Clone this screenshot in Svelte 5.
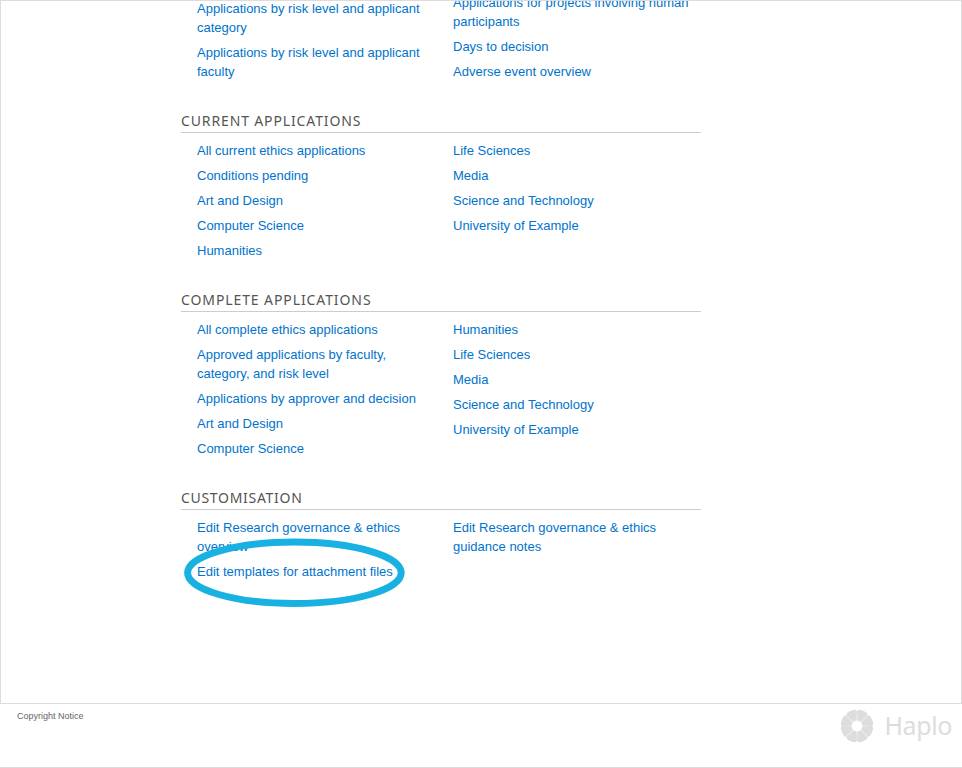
<script>
  const sections = [
    {
      title: 'Current applications', spacing: 0.87,
      left: ['All current ethics applications', 'Conditions pending', 'Art and Design', 'Computer Science', 'Humanities'],
      right: ['Life Sciences', 'Media', 'Science and Technology', 'University of Example']
    },
    {
      title: 'Complete applications', spacing: 0.9,
      left: ['All complete ethics applications', 'Approved applications by faculty,\ncategory, and risk level', 'Applications by approver and decision', 'Art and Design', 'Computer Science'],
      right: ['Humanities', 'Life Sciences', 'Media', 'Science and Technology', 'University of Example']
    },
    {
      title: 'Customisation', spacing: 0.7,
      left: ['Edit Research governance & ethics\noverview', 'Edit templates for attachment files'],
      right: ['Edit Research governance & ethics\nguidance notes']
    }
  ];
  const first = {
    left: ['Applications by risk level and applicant\ncategory', 'Applications by risk level and applicant\nfaculty'],
    right: ['Applications for projects involving human\nparticipants', 'Days to decision', 'Adverse event overview']
  };
  const petals = [0, 45, 90, 135, 180, 225, 270, 315];
</script>

{#snippet columns(group)}
  <div class="columns">
    {#each [group.left, group.right] as links}
      <ul>
        {#each links as link}
          <li>
            <a href="#top">{link}</a>
            {#if link.startsWith('Edit templates')}
              <svg class="ring" width="222" height="70" viewBox="0 0 222 70">
                <ellipse cx="111.4" cy="34.8" rx="106.8" ry="30.7" />
              </svg>
            {/if}
          </li>
        {/each}
      </ul>
    {/each}
  </div>
{/snippet}

<div class="screen">
  <main>
    <div class="content">
      <div class="first">{@render columns(first)}</div>
      {#each sections as section}
        <section>
          <h2 style:letter-spacing="{section.spacing}px">{section.title}</h2>
          {@render columns(section)}
        </section>
      {/each}
    </div>
  </main>
  <footer>
    <a class="copyright" href="#top">Copyright Notice</a>
    <div class="brand">
      <svg width="34" height="34" viewBox="-17 -17 34 34">
        {#each petals as angle}
          <path transform="rotate({angle + 22.5})" d="M-1.8 -5.1 L-5.7 -14 Q-5.1 -15.6 -3.6 -16 Q0 -16.7 3.6 -16 Q5.1 -15.6 5.7 -14 L1.8 -5.1 Q0 -5.7 -1.8 -5.1Z" />
        {/each}
      </svg>
      <span>Haplo</span>
    </div>
  </footer>
</div>

<style>
  :global(body) { background: #fff; }
  .screen {
    box-sizing: border-box;
    width: 962px;
    height: 768px;
    display: flex;
    flex-direction: column;
    border-bottom: 1px solid #ddd;
    font-family: "Liberation Sans", Arial, sans-serif;
    overflow: hidden;
  }
  main {
    box-sizing: border-box;
    height: 704px;
    border: 1px solid #ddd;
    padding-left: 180px;
    overflow: hidden;
  }
  .content { width: 520px; }
  .first {
    height: 86px;
    display: flex;
    align-items: flex-end;
  }
  .first .columns { align-items: flex-end; }
  .columns { display: flex; padding-left: 16px; }
  ul { flex: none; list-style: none; margin: 0; padding: 0; width: 256px; }
  li { position: relative; margin-bottom: 6px; line-height: 19px; font-size: 13px; }
  a { color: #0073cd; text-decoration: none; }
  li a { display: block; white-space: pre; }
  h2 {
    box-sizing: border-box;
    height: 46px;
    margin: 0 0 8px;
    padding-top: 24px;
    border-bottom: 1px solid #ccc;
    font: 400 14px/20px "Noto Sans", sans-serif;
    color: #555;
    text-transform: uppercase;
  }
  .ring { position: absolute; left: -14px; top: -24px; }
  .ring ellipse { fill: none; stroke: #19b1e1; stroke-width: 7; }
  footer { display: flex; justify-content: space-between; padding: 5px 10px 0 17px; }
  .copyright { color: #666; font-size: 9px; line-height: 12px; padding-top: 1px; }
  .brand { display: flex; gap: 10px; color: #ddd; }
  .brand svg { fill: #ddd; }
  .brand span { font: 400 25px/32px "Noto Sans", sans-serif; letter-spacing: -0.4px; }
</style>
